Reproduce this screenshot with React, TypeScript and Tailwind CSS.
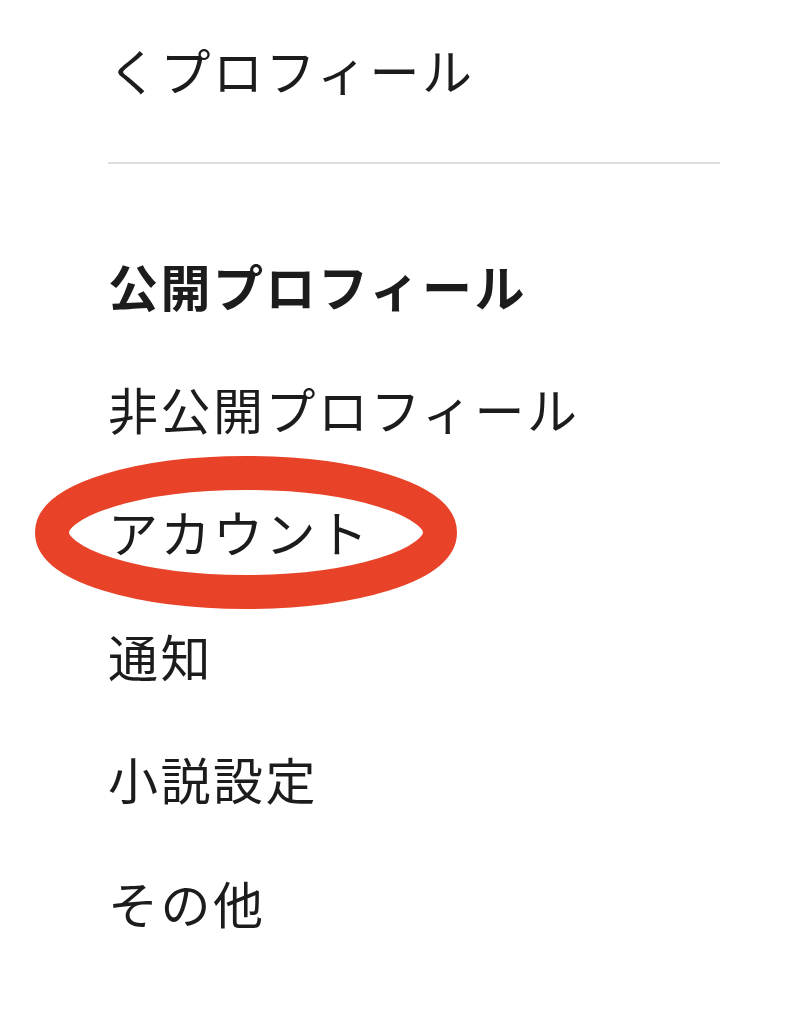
import { FC } from 'react';

const items = ['公開プロフィール', '非公開プロフィール', 'アカウント', '通知', '小説設定', 'その他'];

const App: FC = () => {
  return (
    <div
      className="w-[799px] h-[1024px] bg-white text-[#1c1c1c] overflow-hidden"
      style={{ fontFamily: '"Noto Sans CJK JP", "Noto Sans", sans-serif' }}
    >
      <div className="pl-[108px] w-[720px]">
        <div className="h-[162px] pt-[44px] text-[50px] tracking-[2.5px] leading-none">
          くプロフィール
        </div>
        <div className="h-[2px] bg-[#dddddd]" />
        <div className="pt-[59px]">
          {items.map((label, i) => (
            <div key={label} className="relative h-[123.4px] flex items-center">
              {label === 'アカウント' && (
                <svg
                  className="absolute left-[-73px] top-[-14px]"
                  width="422"
                  height="153"
                  viewBox="0 0 422 153"
                >
                  <ellipse cx="211" cy="76.5" rx="194" ry="59.5" fill="none" stroke="#e84328" strokeWidth="34" />
                </svg>
              )}
              <span
                className={
                  'relative text-[50px] tracking-[2.5px] leading-none ' + (i === 0 ? 'font-bold' : 'font-normal')
                }
              >
                {label}
              </span>
            </div>
          ))}
        </div>
      </div>
    </div>
  );
};

export default App;
